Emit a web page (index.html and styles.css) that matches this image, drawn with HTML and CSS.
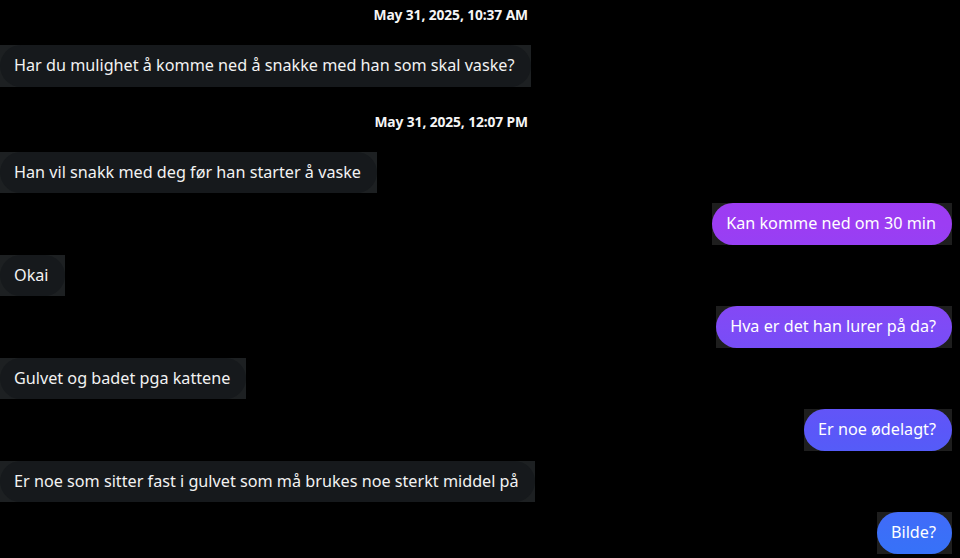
FILE: index.html
```html
<!DOCTYPE html>
<html lang="no">
<head>
<meta charset="utf-8">
<title>Chat</title>
<link rel="stylesheet" href="styles.css">
</head>
<body>
<main class="chat">
  <div class="ts">May 31, 2025, 10:37 AM</div>
  <div class="msg in"><div class="bubble">Har du mulighet å komme ned å snakke med han som skal vaske?</div></div>
  <div class="ts">May 31, 2025, 12:07 PM</div>
  <div class="msg in"><div class="bubble">Han vil snakk med deg før han starter å vaske</div></div>
  <div class="msg out"><div class="bubble">Kan komme ned om 30 min</div></div>
  <div class="msg in"><div class="bubble">Okai</div></div>
  <div class="msg out"><div class="bubble">Hva er det han lurer på da?</div></div>
  <div class="msg in"><div class="bubble">Gulvet og badet pga kattene</div></div>
  <div class="msg out"><div class="bubble">Er noe ødelagt?</div></div>
  <div class="msg in"><div class="bubble">Er noe som sitter fast i gulvet som må brukes noe sterkt middel på</div></div>
  <div class="msg out"><div class="bubble">Bilde?</div></div>
</main>
</body>
</html>
```
FILE: styles.css
```css
html, body {
  margin: 0;
  padding: 0;
  background: #000;
  height: 100%;
  overflow: hidden;
}
.chat {
  display: flex;
  flex-direction: column;
  padding: 5px 8px 0 0;
  font-family: "Noto Sans", "Open Sans", sans-serif;
  color: #f2f2f2;
}
.ts {
  width: 528px;
  text-align: right;
  font-size: 13.8px;
  font-weight: 700;
  line-height: 20px;
  margin: 0 0 20px;
  color: #f5f5f5;
  letter-spacing: -0.1px;
}
.msg + .ts {
  margin-top: 15px;
}
.msg {
  margin-bottom: 10px;
  max-width: 560px;
}
.msg.in {
  align-self: flex-start;
  background: #1d2022;
}
.msg.out {
  align-self: flex-end;
  background: #1e1e1e;
}
.bubble {
  font-size: 16.2px;
  line-height: 21.5px;
  padding: 10px 16px 10px 14px;
  border-radius: 21px;
}
.in .bubble {
  background: #16191c;
}
.out .bubble {
  color: #fff;
  background: linear-gradient(to bottom, #a436f2 0, #9c3df3 225px, #7e4bf6 327px, #5b57f8 430px, #3b6ff8 533px, #3672f8 558px) fixed;
}
```
